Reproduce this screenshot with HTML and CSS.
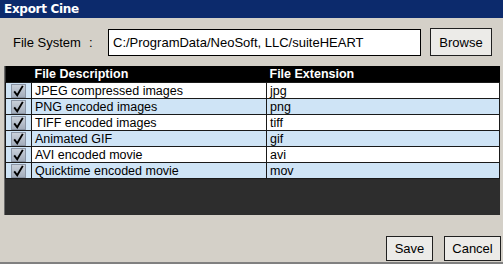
FILE: index.html
```html
<!DOCTYPE html>
<html lang="en">
<head>
	<meta charset="UTF-8">
	<title>Export Cine</title>
	<link rel="stylesheet" href="styles.css">
</head>
<body>
	<div class="dlg">
		<div class="caption">Export Cine</div>
		<div class="pathRow">
			<span class="lbl">File System</span>
			<span class="colon">:</span>
			<div class="pathBox">C:/ProgramData/NeoSoft, LLC/suiteHEART</div>
			<button class="btn browse">Browse</button>
		</div>
		<div class="gridWrap">
			<table class="grid">
				<thead>
					<tr><th class="chk"></th><th>File Description</th><th>File Extension</th></tr>
				</thead>
				<tbody>
					<tr><td class="chk"><i class="box"><svg viewBox="0 0 15 14"><path d="M2.5 7.5 L6 12 L12.5 1"/></svg></i></td><td>JPEG compressed images</td><td>jpg</td></tr>
					<tr class="alt"><td class="chk"><i class="box"><svg viewBox="0 0 15 14"><path d="M2.5 7.5 L6 12 L12.5 1"/></svg></i></td><td>PNG encoded images</td><td>png</td></tr>
					<tr><td class="chk"><i class="box"><svg viewBox="0 0 15 14"><path d="M2.5 7.5 L6 12 L12.5 1"/></svg></i></td><td>TIFF encoded images</td><td>tiff</td></tr>
					<tr class="alt"><td class="chk"><i class="box"><svg viewBox="0 0 15 14"><path d="M2.5 7.5 L6 12 L12.5 1"/></svg></i></td><td>Animated GIF</td><td>gif</td></tr>
					<tr><td class="chk"><i class="box"><svg viewBox="0 0 15 14"><path d="M2.5 7.5 L6 12 L12.5 1"/></svg></i></td><td>AVI encoded movie</td><td>avi</td></tr>
					<tr class="alt"><td class="chk"><i class="box"><svg viewBox="0 0 15 14"><path d="M2.5 7.5 L6 12 L12.5 1"/></svg></i></td><td>Quicktime encoded movie</td><td>mov</td></tr>
				</tbody>
			</table>
			<div class="filler"></div>
		</div>
		<div class="foot">
			<button class="btn save">Save</button>
			<button class="btn cancel">Cancel</button>
		</div>
	</div>
</body>
</html>
```
FILE: styles.css
```css
body{margin: 0;padding: 0;}
*{box-sizing: border-box;}

.dlg{width: 503px;height: 264px;background: #d4d0c8;display: flex;flex-direction: column;font-family: "Liberation Sans", Arial, sans-serif;color: #000;border-bottom: 2px solid #808080;}

.caption{height: 18px;background: #0c2a6c;color: #fff;font: bold 12px/18px "DejaVu Sans", "Liberation Sans", sans-serif;padding-left: 4px;letter-spacing: -0.3px;}

.pathRow{display: flex;align-items: center;height: 48px;padding: 0 11px 0 13px;font-size: 13px;}
.lbl{width: 76px;}
.colon{width: 19px;}
.pathBox{width: 313px;height: 27px;background: #fff;border: 1px solid #000;line-height: 25px;padding-left: 4px;white-space: nowrap;overflow: hidden;}
.btn{font-family: "Liberation Sans", Arial, sans-serif;font-size: 13px;background: #ecebe8;border: 1px solid #202020;color: #000;padding: 0;}
.browse{width: 62px;height: 28px;margin-left: 9px;}

.gridWrap{margin: 0 3px 0 4px;background: #2d2d2d;height: 149px;display: flex;flex-direction: column;border-left: 1px solid #6c6c6c;}
.grid{border-collapse: collapse;width: 100%;font-size: 12.5px;table-layout: fixed;}
.grid th{background: #000;color: #fff;text-align: left;font-weight: bold;height: 16px;padding: 0 0 0 3px;line-height: 16px;}
.grid th.chk{width: 26px;}
.grid th:nth-child(2){width: 235px;}
.grid td{background: #fff;height: 16px;padding: 0 0 0 3px;line-height: 14px;border: 1px solid #1a1a1a;white-space: nowrap;overflow: hidden;}
.grid tr.alt td{background: #cfe4f6;}
.grid td.chk{background: #cfe4f6;padding: 0 0 0 5px;}
.box{display: block;width: 15px;height: 14px;background: linear-gradient(#c9d0da, #a3adbc);border: 1px solid #8a94a4;}
.box svg{display: block;width: 13px;height: 12px;}
.box path{fill: none;stroke: #000;stroke-width: 2.2;}
.filler{flex: 1;}

.foot{flex: 1;display: flex;justify-content: flex-end;align-items: flex-end;padding: 0 2px 1px 0;gap: 11px;}
.save{width: 47px;height: 25px;}
.cancel{width: 57px;height: 25px;}
```
